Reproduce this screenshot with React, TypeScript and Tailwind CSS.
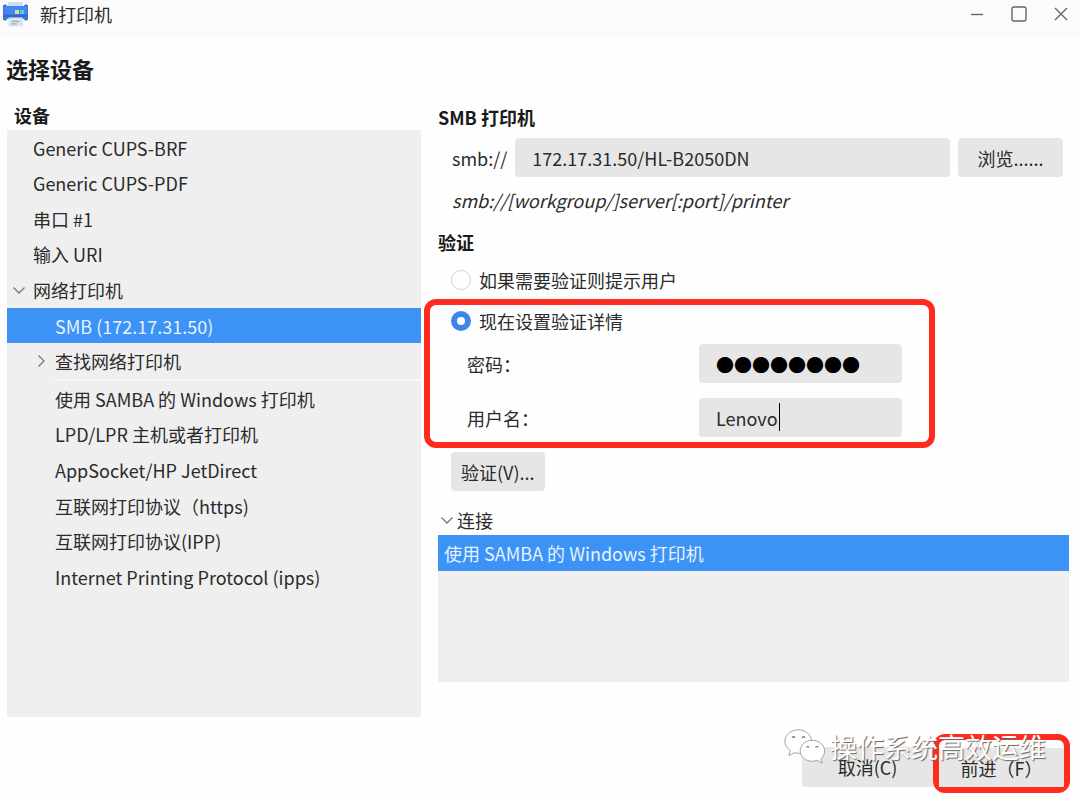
import React, { useState } from "react";

type Device = { name: string; level: 1 | 2; expander?: "open" | "closed" };

const topDevices: Device[] = [
  { name: "Generic CUPS-BRF", level: 1 },
  { name: "Generic CUPS-PDF", level: 1 },
  { name: "串口 #1", level: 1 },
  { name: "输入 URI", level: 1 },
  { name: "网络打印机", level: 1, expander: "open" },
  { name: "SMB (172.17.31.50)", level: 2 },
  { name: "查找网络打印机", level: 2, expander: "closed" },
];

const protocolDevices: Device[] = [
  { name: "使用 SAMBA 的 Windows 打印机", level: 2 },
  { name: "LPD/LPR 主机或者打印机", level: 2 },
  { name: "AppSocket/HP JetDirect", level: 2 },
  { name: "互联网打印协议（https)", level: 2 },
  { name: "互联网打印协议(IPP)", level: 2 },
  { name: "Internet Printing Protocol (ipps)", level: 2 },
];

function Chevron({ open }: { open: boolean }) {
  return (
    <svg viewBox="0 0 12 12" className="size-3 shrink-0" fill="none" stroke="#777777" strokeWidth="1.3" aria-hidden="true">
      <path d={open ? "M0.5 3.5 L6 9 L11.5 3.5" : "M3.5 0.5 L9 6 L3.5 11.5"} />
    </svg>
  );
}

function PrinterIcon() {
  return (
    <svg viewBox="0 0 28 26" className="h-[26px] w-7" aria-hidden="true">
      <rect x="6" y="1" width="15" height="6" rx="1.5" fill="#c9dcf5" />
      <rect x="1" y="3.500" width="4" height="16" rx="1.800" fill="#3563c4" />
      <rect x="22" y="3.500" width="4" height="16" rx="1.800" fill="#3563c4" />
      <rect x="1.500" y="5" width="24" height="13" rx="1.500" fill="#4787ec" />
      <rect x="1.500" y="13.500" width="24" height="3" fill="#3468d0" />
      <rect x="13" y="9" width="4" height="4" fill="#d5dfa0" />
      <rect x="18" y="9" width="4" height="4" fill="#5cc6ee" />
      <path d="M6.500 16.500 H20.500 L21.200 24 Q21.200 25.500 19.500 25.500 H8 Q6.300 25.500 6.300 24 Z" fill="#d9e5f2" />
      <path d="M9.500 20.300 H17.500 M9 22.800 H15" stroke="#a3abb7" strokeWidth="1.300" />
    </svg>
  );
}

function WeChatMark() {
  return (
    <svg viewBox="0 0 44 38" className="h-[37px] w-[42px] shrink-0" aria-hidden="true">
      <g fill="#ffffff" stroke="#a0a0a0" strokeWidth="1">
        <path d="M15 1.500 C7 1.500 1 7 1 13.500 C1 17.500 3 21 6.500 23.300 L5 28.500 L11 25.500 C13 26 15 26.200 17 26 L29 13 C28 6 22 1.500 15 1.500 Z" />
        <path d="M29.500 12.500 C22.500 12.500 17 17.500 17 23.500 C17 30 23 34.500 29.500 34.500 C31.500 34.500 33.500 34 35 33.500 L40 36.500 L38.800 31.500 C41.500 29.500 42.500 26.500 42.500 23.500 C42.500 17.500 36.500 12.500 29.500 12.500 Z" />
      </g>
      <g fill="none" stroke="#777777" strokeWidth="1.300">
        <path d="M8.500 10 Q10 7.500 11.500 10 M19 10 Q20.500 7.500 22 10 M23.500 20 Q25 18 26.500 20 M33 20 Q34.500 18 36 20" />
      </g>
    </svg>
  );
}

function DeviceRows({ items, selected, onSelect }: { items: Device[]; selected: string; onSelect: (name: string) => void }) {
  return (
    <>
      {items.map((d) => (
        <button
          key={d.name}
          type="button"
          role="treeitem"
          aria-level={d.level}
          aria-selected={d.name === selected}
          aria-expanded={d.expander ? d.expander === "open" : undefined}
          onClick={() => onSelect(d.name)}
          className={`flex min-h-0 items-center gap-2 text-left ${d.level === 1 ? "pl-1.5" : "pl-7"} ${
            d.name === selected ? "bg-[#3d92f5] text-[#e6f2ff]" : ""
          }`}
        >
          <span className="flex w-3 justify-center">{d.expander && <Chevron open={d.expander === "open"} />}</span>
          <span>{d.name}</span>
        </button>
      ))}
    </>
  );
}

export default function App() {
  const [selected, setSelected] = useState("SMB (172.17.31.50)");
  const [uri, setUri] = useState("172.17.31.50/HL-B2050DN");
  const [auth, setAuth] = useState("now");
  const [password, setPassword] = useState("password");
  const [user, setUser] = useState("Lenovo");

  const radio =
    "size-5 shrink-0 appearance-none rounded-full border border-[#cfcfcf] bg-white checked:border-[6px] checked:border-[#3f86ea]";
  const field = "h-[39px] w-full rounded bg-[#e6e6e6] px-[17px] outline-none";

  return (
    <div className="flex min-h-screen flex-col bg-[#fefefe] font-['Noto_Sans_CJK_SC',sans-serif] text-[18px] leading-[26px] text-[#2b2b2b]">
      <header className="flex h-9 items-center justify-between bg-[#fbfbfb] pr-2.5 pb-2 pl-0.5">
        <div className="flex items-center gap-2.5">
          <PrinterIcon />
          <span>新打印机</span>
        </div>
        <div className="flex items-center gap-6 text-[#666666]">
          <button type="button" aria-label="最小化" className="size-[18px]">
            <svg viewBox="0 0 18 18" fill="none" stroke="currentColor" strokeWidth="1.4">
              <path d="M3 9.500 H15" />
            </svg>
          </button>
          <button type="button" aria-label="最大化" className="size-[18px]">
            <svg viewBox="0 0 18 18" fill="none" stroke="currentColor" strokeWidth="1.4">
              <rect x="2" y="2" width="14" height="14" rx="2" />
            </svg>
          </button>
          <button type="button" aria-label="关闭" className="size-[18px]">
            <svg viewBox="0 0 18 18" fill="none" stroke="currentColor" strokeWidth="1.4">
              <path d="M3 3 L15 15 M15 3 L3 15" />
            </svg>
          </button>
        </div>
      </header>

      <h1 className="px-1.5 pt-3.5 text-[22px] leading-9 font-bold text-[#1a1a1a]">选择设备</h1>

      <main className="grid grid-cols-[414fr_631fr] gap-[17px] pr-[11px] pl-[7px]">
        <section className="flex flex-col pt-4">
          <h2 className="mb-0.5 pl-[7px] font-bold text-[#1a1a1a]">设备</h2>
          <div role="tree" aria-label="设备" className="flex h-[587px] flex-col bg-[#efefef]">
            <div role="group" className="grid h-[249px] auto-rows-fr">
              <DeviceRows items={topDevices} selected={selected} onSelect={setSelected} />
            </div>
            <hr className="ml-12 border-t-2 border-[#f8f8f8]" />
            <div role="group" className="grid h-[214px] auto-rows-fr">
              <DeviceRows items={protocolDevices} selected={selected} onSelect={setSelected} />
            </div>
          </div>
        </section>

        <section className="flex flex-col pt-[18px]">
          <h2 className="font-bold text-[#1a1a1a]">SMB 打印机</h2>
          <div className="mt-2 flex items-center gap-2 pr-1.5 pl-3.5">
            <label htmlFor="uri">smb://</label>
            <input id="uri" className={field} value={uri} onChange={(e) => setUri(e.target.value)} />
            <button type="button" className="h-[39px] w-[105px] shrink-0 rounded bg-[#e6e6e6]">
              浏览......
            </button>
          </div>
          <p className="mt-2.5 pl-3.5 italic">smb://[workgroup/]server[:port]/printer</p>

          <h2 className="mt-4 font-bold text-[#1a1a1a]">验证</h2>
          <label className="mt-3 flex items-center gap-2 pl-[13px]">
            <input type="radio" name="auth" className={radio} checked={auth === "ask"} onChange={() => setAuth("ask")} />
            如果需要验证则提示用户
          </label>

          <div className="mt-1.5 mr-[134px] -ml-3.5 flex h-[149px] flex-col rounded-xl border-6 border-[#ff2b1f] pr-[27px] pl-[21px]">
            <label className="mt-[3px] flex items-center gap-2">
              <input type="radio" name="auth" className={radio} checked={auth === "now"} onChange={() => setAuth("now")} />
              现在设置验证详情
            </label>
            <div className="mt-2.5 flex items-center justify-between pl-4">
              <label htmlFor="password">密码：</label>
              <div className="relative w-[203px]">
                <input
                  id="password"
                  type="password"
                  className={`${field} text-transparent`}
                  value={password}
                  onChange={(e) => setPassword(e.target.value)}
                />
                <span aria-hidden="true" className="pointer-events-none absolute inset-y-0 left-[17px] flex items-center text-black">
                  {"●".repeat(password.length)}
                </span>
              </div>
            </div>
            <div className="mt-[15px] flex items-center justify-between pl-4">
              <label htmlFor="user">用户名：</label>
              <div className="relative w-[203px]">
                <input id="user" className={field} value={user} onChange={(e) => setUser(e.target.value)} />
                <span aria-hidden="true" className="absolute top-[5px] left-20 h-7 w-px bg-black" />
              </div>
            </div>
          </div>

          <button type="button" className="mt-1 ml-[13px] h-[39px] self-start rounded bg-[#e6e6e6] px-2.5">
            验证(V)...
          </button>

          <h2 className="mt-4 flex items-center gap-1 pl-[3px]">
            <Chevron open />
            连接
          </h2>
          <ul className="mt-0.5 h-[147px] bg-[#efefef]">
            <li className="flex h-9 items-center bg-[#3d92f5] pl-1.5 text-[#e6f2ff]">使用 SAMBA 的 Windows 打印机</li>
          </ul>
        </section>
      </main>

      <footer className="relative mt-[17px] flex justify-end pr-2.5 pb-1">
        <div className="flex items-end">
          <button type="button" className="mb-1.5 h-10 w-[131px] rounded-l bg-[#e6e6e6]">
            取消(C)
          </button>
          <div className="rounded-xl border-6 border-[#ff2b1f] pt-2">
            <button type="button" className="h-[39px] w-[125px] bg-[#e6e6e6]">
              前进（F）
            </button>
          </div>
        </div>
        <div className="pointer-events-none absolute -top-1.5 right-[34px] flex items-center gap-1">
          <WeChatMark />
          <span className="text-[27px] leading-9 whitespace-nowrap text-white [text-shadow:1px_1px_1px_#666666]">操作系统高效运维</span>
        </div>
      </footer>
    </div>
  );
}
